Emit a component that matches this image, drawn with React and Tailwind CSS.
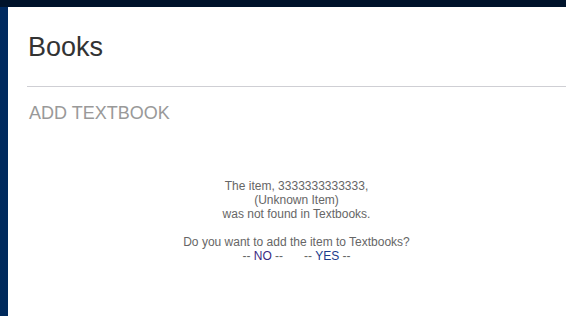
export default function App() {
  return (
    <div className="h-[316px] w-[566px] overflow-hidden flex flex-col bg-white font-['Liberation_Sans',Arial,sans-serif]">
      {/* Top bar */}
      <div className="h-[7px] bg-[#00132b] flex-shrink-0" />
      <div className="flex flex-1">
        {/* Left rail */}
        <div className="w-[8px] bg-gradient-to-b from-[#002a60] to-[#002a5c] flex-shrink-0" />
        <main className="flex-1 pl-[19px]">
          <h1 className="pt-[27px] pl-[1px] text-[27px] leading-[27px] text-[#333]">Books</h1>
          <div className="mt-[25px] h-px bg-[#cfcfd4]" />
          <h2 className="mt-[17px] pl-[2px] text-[18px] leading-[18px] text-[#999]">ADD TEXTBOOK</h2>
          <div className="mt-[57px] text-center text-[12px] leading-[14px] text-[#666]">
            <p>The item, 3333333333333,</p>
            <p>(Unknown Item)</p>
            <p>was not found in Textbooks.</p>
            <p>&nbsp;</p>
            <p>Do you want to add the item to Textbooks?</p>
            <p>
              <span>-- <span className="text-[#3b2a82]">NO</span> --</span>
              <span className="ml-[21px]">-- <span className="text-[#1b3b8c]">YES</span> --</span>
            </p>
          </div>
        </main>
      </div>
    </div>
  );
}
